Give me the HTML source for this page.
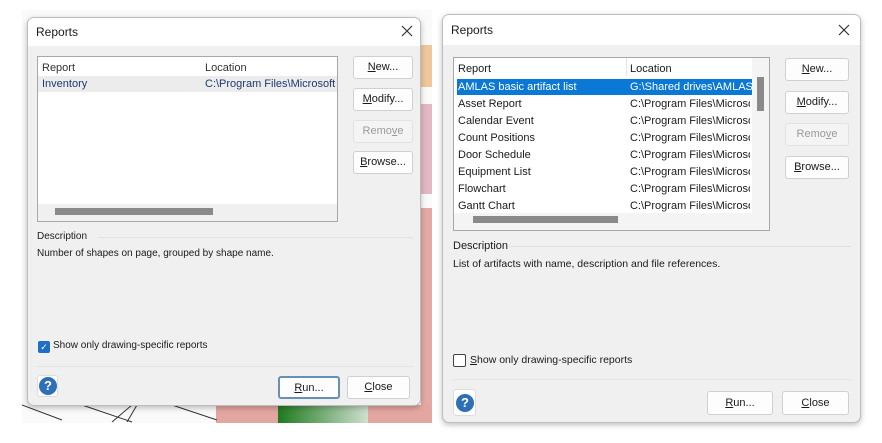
<!DOCTYPE html>
<html><head><meta charset="utf-8"><style>
*{box-sizing:border-box;margin:0;padding:0}
body{width:882px;height:443px;background:#fff;position:relative;overflow:hidden;font-family:"Liberation Sans",sans-serif;font-size:11px;color:#1a1a1a}
.a{position:absolute}
.dlg{position:absolute;background:#f0f0f0;border:1px solid #bdbdbd;border-radius:7px;overflow:hidden;box-shadow:0 2px 6px rgba(0,0,0,.25)}
.tb{position:absolute;left:0;top:0;right:0;background:#fff}
.btn{position:absolute;background:#fdfdfd;border:1px solid #d0d0d0;border-radius:3px;text-align:center;font-size:11px}
.dis{color:#9a9a9a;background:#f4f4f4;border-color:#e2e2e2}
.list{position:absolute;background:#fff;border:1px solid #a8a8a8}
.help{position:absolute;width:18px;height:18px;border-radius:50%;background:#2f6fb8;color:#fff;font-weight:bold;font-size:13px;text-align:center;line-height:18px}
.hb{position:absolute;background:#fff;border:1px solid #ddd;border-radius:3px}
</style></head><body>
<div class="a" style="left:22px;top:10px;width:410px;height:413px;background:#fafafa"></div>
<div class="a" style="left:421px;top:45px;width:11px;height:42px;background:#efc79a"></div>
<div class="a" style="left:421px;top:104px;width:11px;height:90px;background:#e4b8c4"></div>
<div class="a" style="left:421px;top:208px;width:11px;height:200px;background:#e4a9a4"></div>
<div class="a" style="left:216px;top:405px;width:62px;height:18px;background:#e3a6a0"></div>
<div class="a" style="left:278px;top:405px;width:90px;height:18px;background:linear-gradient(90deg,#1f7a1f,#cfe0cf)"></div>
<div class="a" style="left:368px;top:405px;width:64px;height:18px;background:#e3a6a0"></div>
<svg class="a" style="left:22px;top:400px" width="200" height="24"><path d="M0 5 L40 20 M60 5 L110 22 M110 5 L90 22 M115 5 L105 22 M150 5 L195 20" stroke="#333" stroke-width="1" fill="none"/></svg>

<div class="dlg" style="left:27px;top:17px;width:394px;height:389px">
 <div class="tb" style="height:28px"></div>
 <div class="a" style="left:8px;top:7px;font-size:12px">Reports</div>
 <svg class="a" style="left:373px;top:7px" width="12" height="12"><path d="M1 1L11 11M11 1L1 11" stroke="#333" stroke-width="1.2"/></svg>
 <div class="list" style="left:9px;top:38px;width:301px;height:166px">
  <div class="a" style="left:4px;top:5px;color:#333">Report</div>
  <div class="a" style="left:167px;top:5px;color:#333">Location</div>
  <div class="a" style="left:0;top:19px;width:299px;height:16px;background:#ececec"></div>
  <div class="a" style="left:4px;top:21px;color:#1d3a70">Inventory</div>
  <div class="a" style="left:167px;top:21px;color:#1d3a70;white-space:nowrap;width:131px;overflow:hidden">C:\Program Files\Microsoft Office</div>
  <div class="a" style="left:0;top:147px;width:299px;height:17px;background:#f0f0f0"></div>
  <div class="a" style="left:17px;top:151px;width:158px;height:7px;background:#8a8a8a"></div>
 </div>
 <div class="btn" style="left:325px;top:38px;width:60px;height:23px;line-height:21px"><u>N</u>ew...</div>
 <div class="btn" style="left:325px;top:70px;width:60px;height:23px;line-height:21px"><u>M</u>odify...</div>
 <div class="btn dis" style="left:325px;top:102px;width:60px;height:23px;line-height:21px">Remo<u>v</u>e</div>
 <div class="btn" style="left:325px;top:133px;width:60px;height:23px;line-height:21px"><u>B</u>rowse...</div>
 <div class="a" style="left:9px;top:213px;font-size:10px">Description</div>
 <div class="a" style="left:70px;top:219px;width:315px;height:1px;background:#e0e0e0"></div>
 <div class="a" style="left:9px;top:230px;font-size:10px">Number of shapes on page, grouped by shape name.</div>
 <div class="a" style="left:10px;top:323px;width:12px;height:12px;background:#1f6fc5;border-radius:2px;color:#fff;font-size:9px;line-height:12px;text-align:center">✓</div>
 <div class="a" style="left:25px;top:322px;font-size:10px">Show only drawing-specific reports</div>
 <div class="a" style="left:9px;top:348px;width:376px;height:1px;background:#e4e4e4"></div>
 <div class="hb" style="left:9px;top:357px;width:21px;height:22px"></div>
 <div class="help" style="left:11px;top:359px">?</div>
 <div class="btn" style="left:250px;top:358px;width:62px;height:23px;line-height:21px;border:2px solid #6a8fb5"><u>R</u>un...</div>
 <div class="btn" style="left:319px;top:358px;width:63px;height:23px;line-height:21px"><u>C</u>lose</div>
</div>

<div class="dlg" style="left:442px;top:14px;width:419px;height:409px">
 <div class="tb" style="height:30px"></div>
 <div class="a" style="left:8px;top:8px;font-size:12px">Reports</div>
 <svg class="a" style="left:395px;top:9px" width="12" height="12"><path d="M1 1L11 11M11 1L1 11" stroke="#333" stroke-width="1.2"/></svg>
 <div class="list" style="left:10px;top:42px;width:317px;height:174px">
  <div class="a" style="left:4px;top:5px">Report</div>
  <div class="a" style="left:172px;top:0;width:1px;height:18px;background:#e5e5e5"></div>
  <div class="a" style="left:176px;top:5px">Location</div>
  <div class="a" style="left:3px;top:21px;width:295px;height:16px;background:#0a78d4"></div>
  <div class="a" style="left:4px;top:23px;color:#fff">AMLAS basic artifact list</div>
  <div class="a" style="left:176px;top:23px;color:#fff;white-space:nowrap">G:\Shared drives\AMLAS</div>
  <div style="position:absolute;left:4px;top:38px;line-height:17px;white-space:nowrap">Asset Report<br>Calendar Event<br>Count Positions<br>Door Schedule<br>Equipment List<br>Flowchart<br>Gantt Chart</div>
  <div style="position:absolute;left:176px;top:38px;line-height:17px;white-space:nowrap;width:120px;overflow:hidden">C:\Program Files\Microsoft<br>C:\Program Files\Microsoft<br>C:\Program Files\Microsoft<br>C:\Program Files\Microsoft<br>C:\Program Files\Microsoft<br>C:\Program Files\Microsoft<br>C:\Program Files\Microsoft</div>
  <div class="a" style="left:298px;top:0;width:17px;height:172px;background:#f4f4f4"></div>
  <div class="a" style="left:303px;top:19px;width:7px;height:34px;background:#8a8a8a"></div>
  <div class="a" style="left:0;top:155px;width:298px;height:17px;background:#f4f4f4"></div>
  <div class="a" style="left:19px;top:158px;width:145px;height:7px;background:#8a8a8a"></div>
 </div>
 <div class="btn" style="left:342px;top:43px;width:64px;height:23px;line-height:21px"><u>N</u>ew...</div>
 <div class="btn" style="left:342px;top:76px;width:64px;height:23px;line-height:21px"><u>M</u>odify...</div>
 <div class="btn dis" style="left:342px;top:108px;width:64px;height:23px;line-height:21px">Remo<u>v</u>e</div>
 <div class="btn" style="left:342px;top:141px;width:64px;height:23px;line-height:21px"><u>B</u>rowse...</div>
 <div class="a" style="left:10px;top:225px">Description</div>
 <div class="a" style="left:66px;top:231px;width:342px;height:1px;background:#e0e0e0"></div>
 <div class="a" style="left:10px;top:243px;font-size:10.5px">List of artifacts with name, description and file references.</div>
 <div class="a" style="left:10px;top:339px;width:13px;height:13px;border:1px solid #444;border-radius:2px;background:#fff"></div>
 <div class="a" style="left:27px;top:339px;font-size:10.5px"><u>S</u>how only drawing-specific reports</div>
 <div class="a" style="left:10px;top:364px;width:398px;height:1px;background:#e4e4e4"></div>
 <div class="hb" style="left:10px;top:374px;width:23px;height:27px"></div>
 <div class="help" style="left:13px;top:379px">?</div>
 <div class="btn" style="left:264px;top:376px;width:66px;height:24px;line-height:22px"><u>R</u>un...</div>
 <div class="btn" style="left:339px;top:376px;width:67px;height:24px;line-height:22px"><u>C</u>lose</div>
</div>
</body></html>
